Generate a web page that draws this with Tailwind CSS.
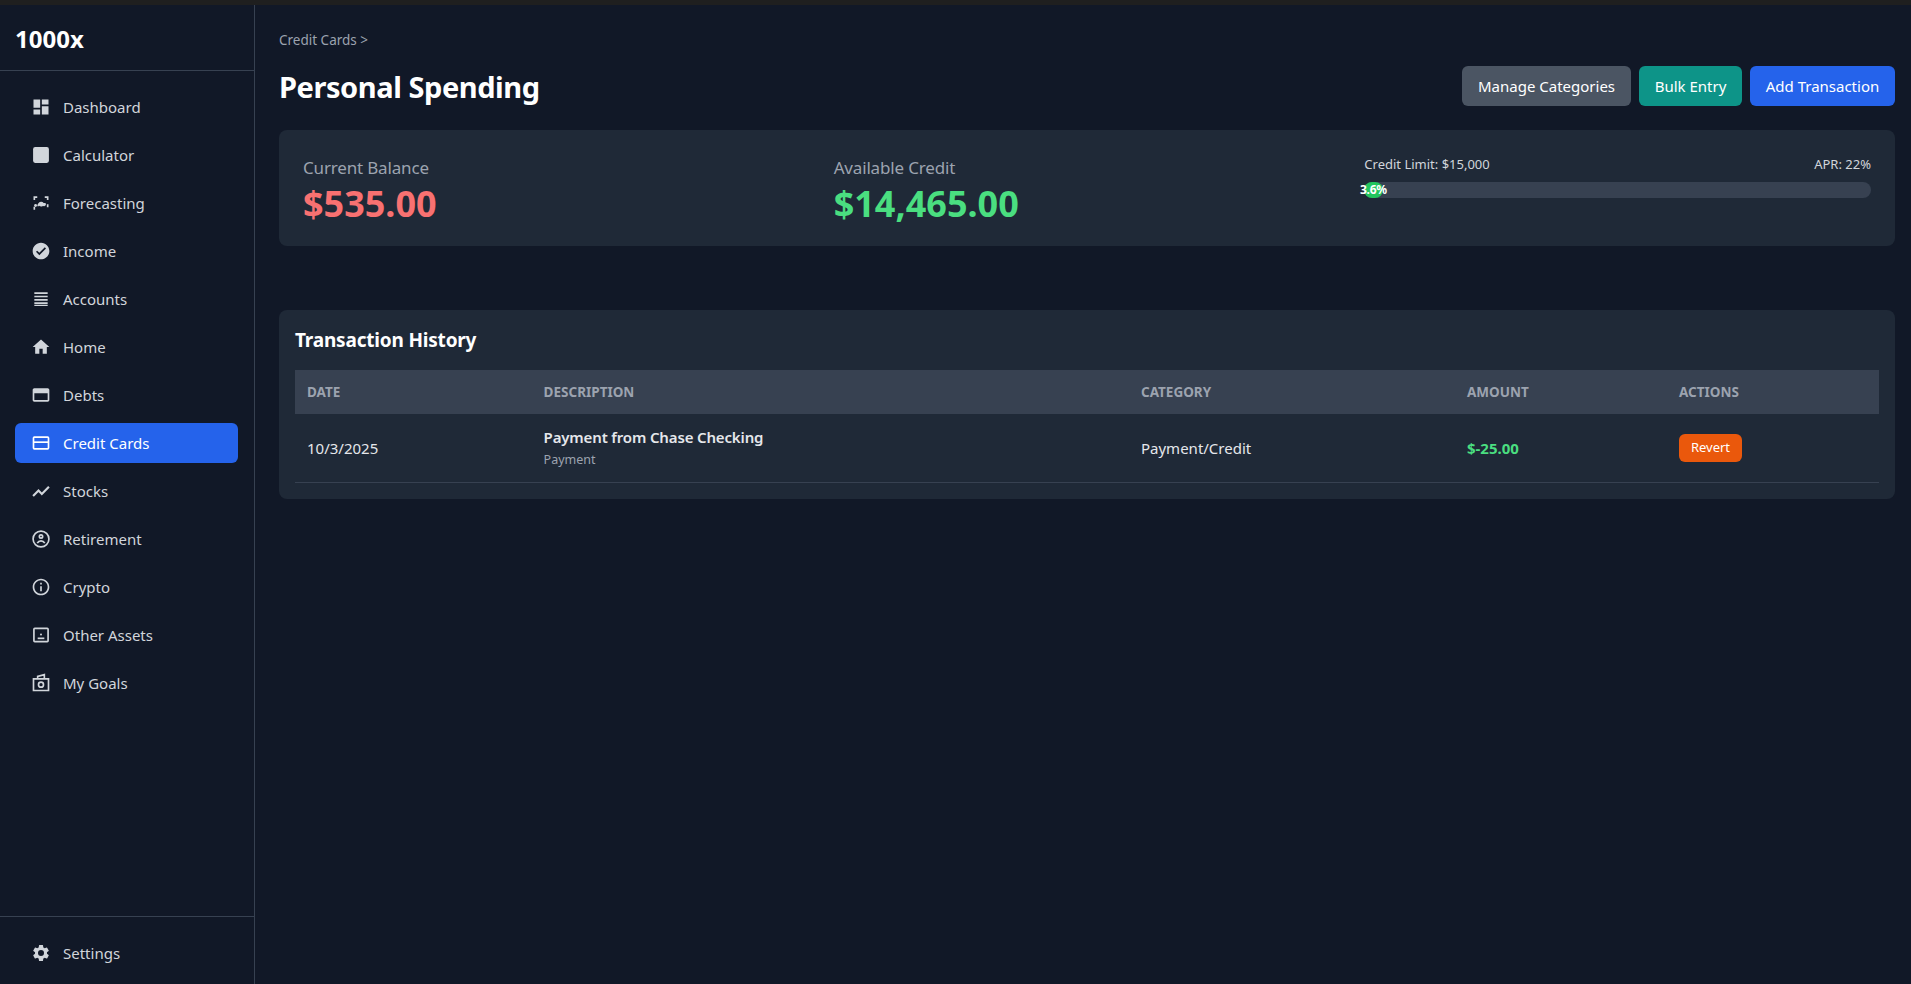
<!doctype html>
<html lang="en" class="overflow-hidden">
<head>
<meta charset="UTF-8" />
<title>1000x - Personal Spending</title>
<script src="https://cdn.jsdelivr.net/npm/@tailwindcss/browser@4"></script>
</head>
<body class="bg-[#111827] text-white h-[984px] overflow-hidden font-['Noto_Sans',sans-serif]">
<div class="h-[5px] bg-[#1f1f1f]"></div>
<div class="flex h-[979px]">
	<!-- Sidebar -->
	<aside class="w-[255px] shrink-0 border-r border-[#374151] flex flex-col">
		<div class="h-[66px] border-b border-[#374151] pl-[15px] flex items-center pt-[3px]">
			<span class="text-2xl font-bold">1000x</span>
		</div>
		<nav class="flex-1 pt-4 pl-[15px] pr-4 flex flex-col gap-2 text-[15px] text-[#d1d5db]">
			<a class="h-10 pl-4 flex items-center gap-3 rounded-md">
				<svg class="w-5 h-5" viewBox="0 0 24 24" fill="currentColor"><path d="M3 13h8V3H3v10zm0 8h8v-6H3v6zm10 0h8V11h-8v10zm0-18v6h8V3h-8z"/></svg>
				Dashboard
			</a>
			<a class="h-10 pl-4 flex items-center gap-3 rounded-md">
				<svg class="w-5 h-5" viewBox="0 0 24 24" fill="currentColor"><rect x="2.5" y="2.5" width="19" height="19" rx="2.5"/></svg>
				Calculator
			</a>
			<a class="h-10 pl-4 flex items-center gap-3 rounded-md">
				<svg class="w-5 h-5" viewBox="0 0 24 24" fill="currentColor"><path d="M3 4h4.500v2H5v2.500H3zM16.500 4H21v4.500h-2V6h-2.500zM19 13.500h2V17h-2zM3 16.500h2V20H3z"/><path d="M7.500 15.500c.5-3 2.300-5 4.700-5 1.200 0 2.200.5 3 1.400l2.300.1.500 2.500-2 1.500-1.800-.5c-.6.4-1.200.6-2 .6-1 0-1.800-.3-2.500-.9l-1.200 1z"/><circle cx="5.500" cy="15" r="1.700"/></svg>
				Forecasting
			</a>
			<a class="h-10 pl-4 flex items-center gap-3 rounded-md">
				<svg class="w-5 h-5" viewBox="0 0 24 24" fill="currentColor"><path d="M12 2C6.48 2 2 6.48 2 12s4.48 10 10 10 10-4.48 10-10S17.52 2 12 2zm-2 15l-4-4 1.410-1.410L10 14.170l6.590-6.590L18 9l-8 8z"/></svg>
				Income
			</a>
			<a class="h-10 pl-4 flex items-center gap-3 rounded-md">
				<svg class="w-5 h-5" viewBox="0 0 24 24" fill="currentColor"><path d="M4 4h16v2H4zM4 8h16v2H4zM4 12h16v2H4zM4 16h16v2H4zM4 19h16v1.500H4z"/></svg>
				Accounts
			</a>
			<a class="h-10 pl-4 flex items-center gap-3 rounded-md">
				<svg class="w-5 h-5" viewBox="0 0 24 24" fill="currentColor"><path d="M10 20v-6h4v6h5v-8h3L12 3 2 12h3v8z"/></svg>
				Home
			</a>
			<a class="h-10 pl-4 flex items-center gap-3 rounded-md">
				<svg class="w-5 h-5" viewBox="0 0 24 24" fill="currentColor"><path d="M20 4H4c-1.110 0-1.990.890-1.990 2L2 18c0 1.110.890 2 2 2h16c1.110 0 2-.890 2-2V6c0-1.110-.890-2-2-2zm0 14H4v-8h16v8z"/></svg>
				Debts
			</a>
			<a class="h-10 pl-4 flex items-center gap-3 rounded-md bg-[#2563eb] text-white">
				<svg class="w-5 h-5" viewBox="0 0 24 24" fill="none" stroke="currentColor" stroke-width="2"><rect x="3" y="5" width="18" height="14" rx="1"/><path d="M3 11h18"/></svg>
				Credit Cards
			</a>
			<a class="h-10 pl-4 flex items-center gap-3 rounded-md">
				<svg class="w-5 h-5" viewBox="0 0 24 24" fill="none" stroke="currentColor" stroke-width="2.600"><path d="M2.500 18l6.500-6.500 4 4 8.500-8.500"/></svg>
				Stocks
			</a>
			<a class="h-10 pl-4 flex items-center gap-3 rounded-md">
				<svg class="w-5 h-5" viewBox="0 0 24 24" fill="none" stroke="currentColor" stroke-width="2"><circle cx="12" cy="12" r="9.500"/><circle cx="12" cy="9" r="2"/><path d="M7.500 17c1-1.800 2.700-2.700 4.500-2.700s3.500.9 4.500 2.700"/></svg>
				Retirement
			</a>
			<a class="h-10 pl-4 flex items-center gap-3 rounded-md">
				<svg class="w-5 h-5" viewBox="0 0 24 24" fill="currentColor"><path d="M11 7h2v2h-2zm0 4h2v6h-2zm1-9C6.480 2 2 6.480 2 12s4.480 10 10 10 10-4.480 10-10S17.520 2 12 2zm0 18c-4.410 0-8-3.590-8-8s3.590-8 8-8 8 3.590 8 8-3.590 8-8 8z"/></svg>
				Crypto
			</a>
			<a class="h-10 pl-4 flex items-center gap-3 rounded-md">
				<svg class="w-5 h-5" viewBox="0 0 24 24" fill="none" stroke="currentColor" stroke-width="2"><rect x="3.500" y="4" width="17" height="16" rx="1"/><path d="M8 16h8"/><circle cx="12" cy="11.500" r="1.200" fill="currentColor" stroke="none"/></svg>
				Other Assets
			</a>
			<a class="h-10 pl-4 flex items-center gap-3 rounded-md">
				<svg class="w-5 h-5" viewBox="0 0 24 24" fill="none" stroke="currentColor" stroke-width="2"><path d="M3 7h18v14H3z"/><path d="M8 7V4l8-2v5"/><circle cx="12" cy="14" r="3"/></svg>
				My Goals
			</a>
		</nav>
		<div class="border-t border-[#374151] pt-4 pb-[11px] pl-[15px] pr-4 text-[15px] text-[#d1d5db]">
			<a class="h-10 pl-4 flex items-center gap-3 rounded-md">
				<svg class="w-5 h-5" viewBox="0 0 24 24" fill="currentColor"><path d="M19.140 12.940c.04-.3.06-.61.06-.94s-.02-.64-.07-.94l2.030-1.580a.49.49 0 0 0 .12-.61l-1.920-3.320a.49.49 0 0 0-.59-.22l-2.390.96a7.030 7.030 0 0 0-1.620-.94l-.36-2.540a.48.48 0 0 0-.48-.41h-3.840a.48.48 0 0 0-.47.41l-.36 2.540c-.59.24-1.130.57-1.620.94l-2.390-.96a.49.49 0 0 0-.59.22L2.740 8.870a.48.48 0 0 0 .12.61l2.030 1.580c-.05.3-.09.63-.09.94s.02.64.07.94l-2.030 1.580a.49.49 0 0 0-.12.61l1.920 3.320c.12.22.37.29.59.22l2.390-.96c.5.38 1.030.7 1.620.94l.36 2.540c.05.24.24.41.48.41h3.840c.24 0 .44-.17.47-.41l.36-2.540c.59-.24 1.130-.56 1.620-.94l2.390.96c.22.08.47 0 .59-.22l1.920-3.320a.48.48 0 0 0-.12-.61l-2.010-1.580zM12 15.600A3.600 3.600 0 1 1 12 8.400a3.600 3.600 0 0 1 0 7.200z"/></svg>
				Settings
			</a>
		</div>
	</aside>

	<!-- Main -->
	<main class="flex-1 pl-6 pr-4 pt-[25px]">
		<div class="text-[13.500px] leading-5 text-[#9ca3af]">Credit Cards &gt;</div>
		<div class="mt-4 flex items-center justify-between h-10">
			<h1 class="text-[29px] font-bold pt-[2px] tracking-[-0.015em]">Personal Spending</h1>
			<div class="flex gap-2 text-[15px]">
				<button class="h-10 w-[169px] rounded-md bg-[#4b5563]">Manage Categories</button>
				<button class="h-10 w-[103px] rounded-md bg-[#0d9488]">Bulk Entry</button>
				<button class="h-10 w-[145px] rounded-md bg-[#2563eb]">Add Transaction</button>
			</div>
		</div>

		<!-- Balance summary -->
		<section class="mt-6 h-[116px] bg-[#1f2937] rounded-lg p-6 grid grid-cols-3 gap-6">
			<div>
				<div class="text-[17px] leading-7 text-[#9ca3af] tracking-[-0.01em]">Current Balance</div>
				<div class="text-4xl font-bold text-[#f87171] pt-[2px]">$535.00</div>
			</div>
			<div>
				<div class="text-[17px] leading-7 text-[#9ca3af] tracking-[-0.01em]">Available Credit</div>
				<div class="text-4xl font-bold text-[#4ade80] pt-[2px]">$14,465.00</div>
			</div>
			<div>
				<div class="flex justify-between text-[13px] leading-5 text-[#d1d5db]">
					<span>Credit Limit: $15,000</span>
					<span>APR: 22%</span>
				</div>
				<div class="mt-2 h-4 rounded-full bg-[#374151]">
					<div class="h-4 rounded-full bg-[#22c55e] flex items-center justify-center text-xs font-bold whitespace-nowrap tracking-[-0.02em]" style="width: 3.6%">3.6%</div>
				</div>
			</div>
		</section>

		<!-- Transactions -->
		<section class="mt-16 bg-[#1f2937] rounded-lg p-4">
			<h2 class="text-[19px] leading-7 font-bold mb-4 tracking-[-0.01em]">Transaction History</h2>
			<table class="w-full table-fixed text-left">
				<colgroup>
					<col class="w-[236.6px]" /><col class="w-[597.4px]" /><col class="w-[326px]" /><col class="w-[212px]" /><col class="w-[212px]" />
				</colgroup>
				<thead class="bg-[#374151] text-[#9ca3af] text-[13.500px] uppercase">
					<tr>
						<th class="h-11 px-3 font-bold">Date</th>
						<th class="h-11 px-3 font-bold">Description</th>
						<th class="h-11 px-3 font-bold">Category</th>
						<th class="h-11 px-3 font-bold">Amount</th>
						<th class="h-11 px-3 font-bold">Actions</th>
					</tr>
				</thead>
				<tbody class="text-[15px]">
					<tr class="border-b border-[#374151]">
						<td class="px-3 h-[68px] text-[#e5e7eb]">10/3/2025</td>
						<td class="px-3 h-[68px]">
							<div class="font-semibold leading-5 text-[#e5e7eb] tracking-[-0.01em]">Payment from Chase Checking</div>
							<div class="text-[12.500px] leading-4 mt-[5px] text-[#9ca3af]">Payment</div>
						</td>
						<td class="px-3 h-[68px] text-[#e5e7eb]">Payment/Credit</td>
						<td class="px-3 h-[68px] font-bold text-[#4ade80]">$-25.00</td>
						<td class="px-3 h-[68px]">
							<button class="h-7 w-[63px] rounded-md bg-[#ea580c] text-white text-[13px]">Revert</button>
						</td>
					</tr>
				</tbody>
			</table>
		</section>
	</main>
</div>
</body>
</html>
